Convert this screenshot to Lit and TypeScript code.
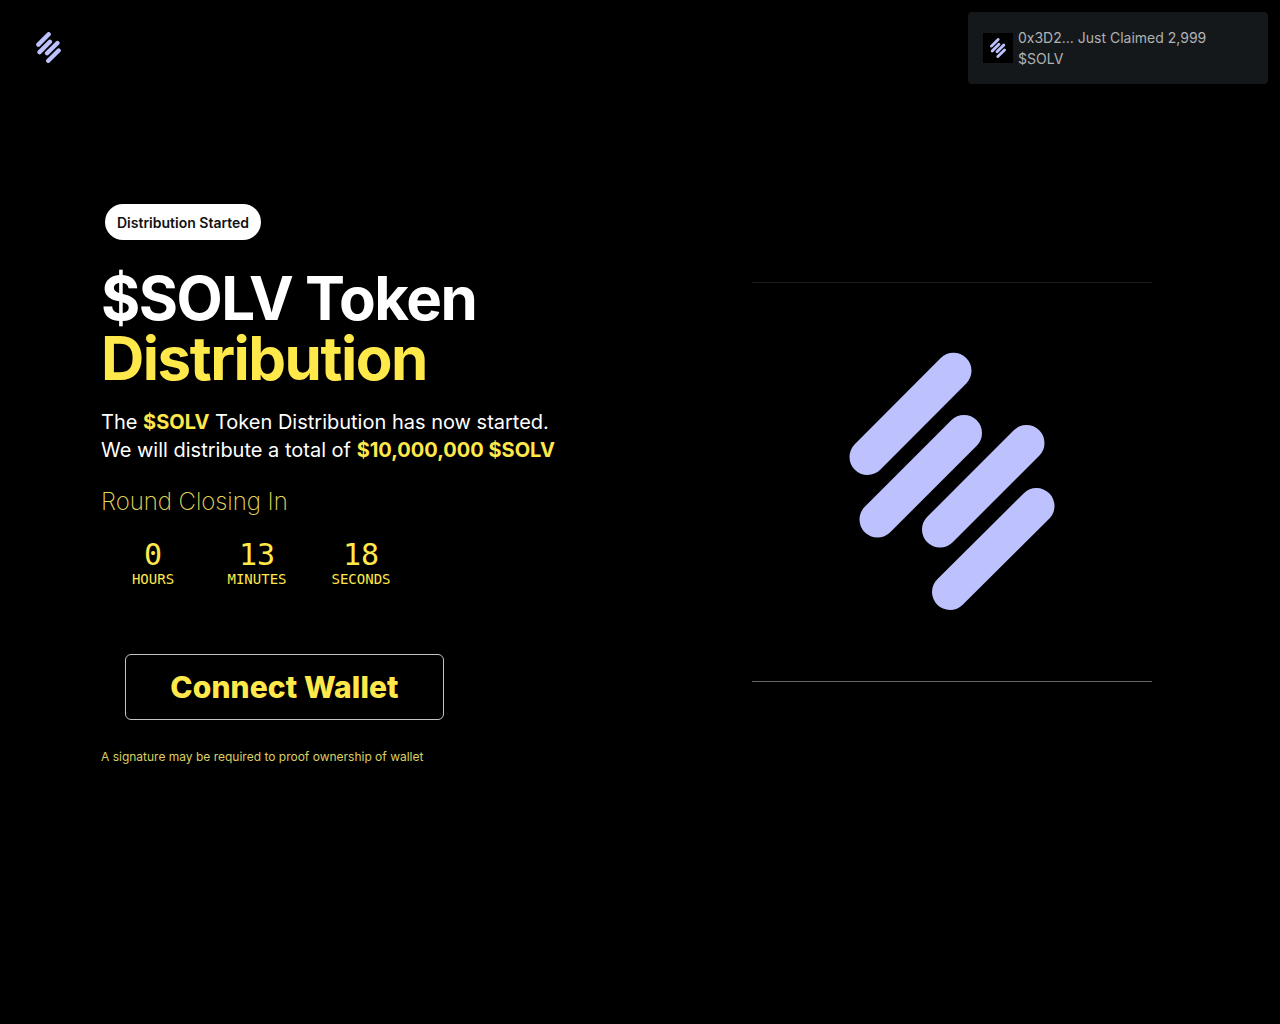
import { LitElement, html, css, svg } from "lit";
import { customElement } from "lit/decorators.js";

const logo = svg`
  <path d="M18.5 105 104.5 18.7M28.5 167.5 115 81M91 177.5 177.5 91M101 240 187.5 154"
    fill="none" stroke="#bdc2ff" stroke-width="36" stroke-linecap="round" />
`;

@customElement("app-root")
export class AppRoot extends LitElement {
  static styles = css`
    :host {
      display: block;
      position: relative;
      min-height: 1024px;
      background: #000;
      color: #fff;
      font-family: Inter, "Liberation Sans", sans-serif;
    }
    svg {
      display: block;
    }
    .header {
      display: flex;
      padding: 32px 36px 0;
      height: 204px;
      box-sizing: border-box;
    }
    .header svg {
      width: 25px;
      height: 31px;
    }
    .toast {
      position: absolute;
      top: 12px;
      right: 12px;
      width: 300px;
      height: 72px;
      box-sizing: border-box;
      padding: 15px;
      display: flex;
      align-items: center;
      gap: 5px;
      background: #14181b;
      border-radius: 4px;
      color: #b0b2b3;
      font-size: 14px;
      line-height: 21px;
    }
    .toast-icon {
      flex: none;
      width: 30px;
      height: 30px;
      background: #000;
      display: flex;
      align-items: center;
      justify-content: center;
    }
    .toast-icon svg {
      width: 16px;
      height: 20px;
    }
    .main {
      display: grid;
      grid-template-columns: 651px 400px;
      padding-left: 101px;
      align-items: start;
    }
    .pill {
      display: inline-block;
      box-sizing: border-box;
      margin-left: 4px;
      padding: 1px 12px 0;
      height: 36px;
      line-height: 35px;
      border-radius: 18px;
      background: #fff;
      color: #111;
      font-size: 14px;
      font-weight: 600;
    }
    h1 {
      margin: 28px 0 0;
      font-size: 60px;
      line-height: 60px;
      font-weight: 700;
      letter-spacing: -1.5px;
    }
    h1 span,
    .lead b {
      color: #ffe84a;
    }
    h1 span {
      display: block;
    }
    .lead {
      margin: 20px 0 0;
      font-size: 20px;
      line-height: 28px;
    }
    .lead b {
      font-weight: 700;
    }
    .closing {
      margin-top: 22px;
      font-size: 24px;
      line-height: 32px;
      font-weight: 200;
      letter-spacing: -0.05px;
      color: #e6d85a;
    }
    .countdown {
      display: grid;
      grid-template-columns: repeat(3, 88px);
      gap: 16px;
      margin: 21px 0 0 8px;
      color: #ffe84a;
      font-family: "DejaVu Sans Mono", monospace;
      text-align: center;
    }
    .value {
      font-size: 30px;
      line-height: 32px;
    }
    .label {
      font-size: 14px;
      line-height: 16px;
    }
    .connect {
      display: block;
      margin: 67px 0 0 24px;
      width: 319px;
      height: 66px;
      box-sizing: border-box;
      padding: 0;
      background: #000;
      border: 1px solid #c4c4c4;
      border-radius: 6px;
      color: #ffe84a;
      font-family: inherit;
      font-size: 30px;
      font-weight: 800;
      letter-spacing: 0.1px;
    }
    .note {
      margin: 29px 0 0;
      font-size: 12px;
      line-height: 16px;
      color: #dccf60;
    }
    .panel {
      margin-top: 78px;
      height: 400px;
      box-sizing: border-box;
      padding-bottom: 2px;
      display: flex;
      align-items: center;
      justify-content: center;
      border-top: 1px solid #1c1c1c;
      border-bottom: 1px solid #666;
    }
    .panel svg {
      width: 206px;
      height: 258px;
    }
  `;

  render() {
    return html`
      <div class="header">
        <svg viewBox="0 0 206 258">${logo}</svg>
      </div>
      <div class="toast">
        <div class="toast-icon"><svg viewBox="0 0 206 258">${logo}</svg></div>
        <div>0x3D2... Just Claimed 2,999 $SOLV</div>
      </div>
      <div class="main">
        <div>
          <div class="pill">Distribution Started</div>
          <h1>$SOLV Token<span>Distribution</span></h1>
          <p class="lead">
            The <b>$SOLV</b> Token Distribution has now started.<br />
            We will distribute a total of <b>$10,000,000 $SOLV</b>
          </p>
          <div class="closing">Round Closing In</div>
          <div class="countdown">
            <div><div class="value">0</div><div class="label">HOURS</div></div>
            <div><div class="value">13</div><div class="label">MINUTES</div></div>
            <div><div class="value">18</div><div class="label">SECONDS</div></div>
          </div>
          <button class="connect">Connect Wallet</button>
          <p class="note">A signature may be required to proof ownership of wallet</p>
        </div>
        <div class="panel">
          <svg viewBox="0 0 206 258">${logo}</svg>
        </div>
      </div>
    `;
  }
}
